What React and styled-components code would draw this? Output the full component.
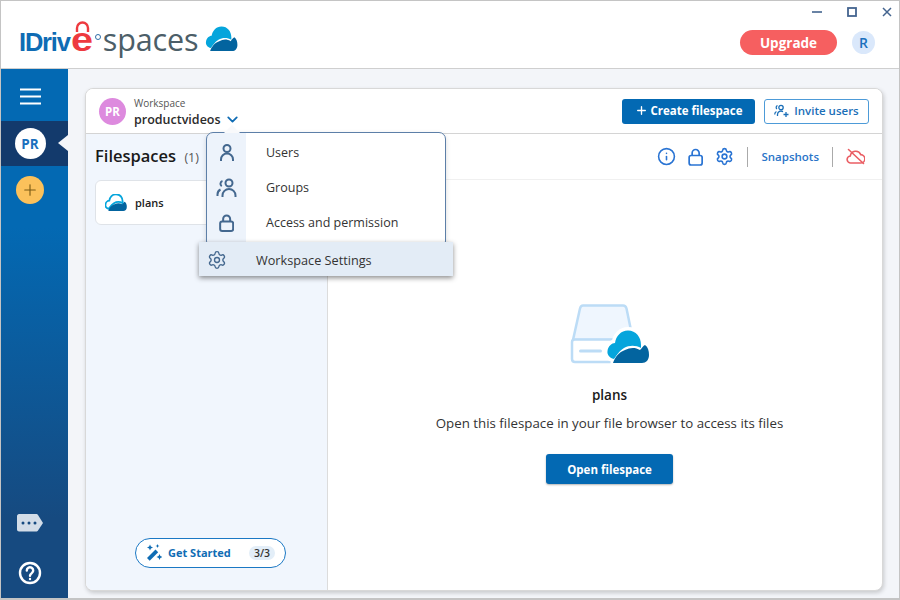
import React from 'react';
import styled, { createGlobalStyle } from 'styled-components';
import { Plus, Info, Settings, ChevronDown } from 'lucide-react';

const Global = createGlobalStyle`
  html, body { margin: 0; padding: 0; }
  body { font-family: "Open Sans", "Noto Sans", sans-serif; color: #222; }
  * { box-sizing: border-box; }
`;

const Window = styled.div`
  width: 900px;
  height: 600px;
  border: 1px solid #c4c4c4;
  border-bottom-width: 2px;
  display: flex;
  flex-direction: column;
  overflow: hidden;
  background: #fff;
`;

const TitleBar = styled.header`
  height: 68px;
  flex: none;
  border-bottom: 1px solid #cfcfcf;
  display: flex;
  align-items: flex-start;
  justify-content: space-between;
  background: #fff;
`;

const Brand = styled.div`
  display: flex;
  align-items: baseline;
  margin: 23px 0 0 18px;
`;

const BrandName = styled.span`
  font-family: "Liberation Sans", sans-serif;
  font-size: 25.5px;
  font-weight: 700;
  letter-spacing: -1.2px;
  color: #0f6cb4;
  line-height: 30px;
`;

const BrandE = styled.span`
  position: relative;
  display: inline-block;
  width: 23px;
  color: #ee3a3f;
  font-family: "Liberation Sans", sans-serif;
  font-size: 33px;
  font-weight: 700;
  line-height: 30px;
  margin-left: 1px;
`;

const BrandEGlyph = styled.span`
  display: inline-block;
  transform: scaleX(1.2);
  transform-origin: left center;
`;

const BrandLock = styled.svg`
  position: absolute;
  left: 4px;
  top: -4px;
`;

const BrandReg = styled.span`
  width: 6px;
  height: 6px;
  border-radius: 50%;
  border: 1.5px solid #2f6ea8;
  margin: 0 2px 0 1px;
  transform: translateY(-11px);
`;

const BrandSpaces = styled.span`
  font-family: "Open Sans", sans-serif;
  font-size: 30.5px;
  font-weight: 400;
  color: #4c5e68;
  letter-spacing: -0.1px;
  line-height: 30px;
  margin-right: 6px;
`;

const TopRight = styled.div`
  display: flex;
  flex-direction: column;
  align-items: flex-end;
`;

const WinControls = styled.div`
  display: flex;
  align-items: center;
  gap: 25px;
  height: 22px;
  margin: 0 7px 7px 0;
  color: #44648f;
`;

const AccountRow = styled.div`
  display: flex;
  align-items: center;
  gap: 15px;
  margin-right: 24px;
`;

const UpgradeButton = styled.button`
  width: 97px;
  height: 25px;
  border: none;
  border-radius: 13px;
  background: #f65f60;
  color: #fff;
  font: 700 13.5px "Open Sans", sans-serif;
  padding: 1px 0 0;
`;

const AccountBadge = styled.div`
  width: 23px;
  height: 23px;
  border-radius: 50%;
  background: #dae8fb;
  color: #1b70bd;
  font-size: 14px;
  font-weight: 600;
  display: flex;
  align-items: center;
  justify-content: center;
`;

const Body = styled.div`
  flex: 1;
  min-height: 0;
  display: flex;
`;

const Sidebar = styled.nav`
  width: 67px;
  flex: none;
  display: flex;
  flex-direction: column;
  background: linear-gradient(180deg, #0369b3 0%, #0369b3 30%, #164a80 85%, #164a80 100%);
`;

const MenuToggle = styled.div`
  height: 52px;
  display: flex;
  align-items: center;
  justify-content: center;
  color: #fff;
  padding: 2px 9px 0 0;
`;

const ActiveWorkspace = styled.div`
  position: relative;
  height: 45px;
  background: #133a6c;
  display: flex;
  align-items: center;
  justify-content: center;
  padding-right: 9px;
  &::after {
    content: '';
    position: absolute;
    right: 0;
    top: 14px;
    border: 8px solid transparent;
    border-left: none;
    border-right: 10px solid #f3f5f9;
  }
`;

const WorkspaceCircle = styled.div`
  width: 31px;
  height: 31px;
  border-radius: 50%;
  background: #fff;
  color: #1b70bd;
  font-size: 13.5px;
  font-weight: 700;
  display: flex;
  align-items: center;
  justify-content: center;
`;

const AddWorkspace = styled.div`
  width: 28px;
  height: 28px;
  margin: 10px 0 0 15px;
  border-radius: 50%;
  background: #fbc15b;
  color: #7a5a14;
  display: flex;
  align-items: center;
  justify-content: center;
`;

const SidebarBottom = styled.div`
  margin-top: auto;
  display: flex;
  flex-direction: column;
  align-items: center;
  gap: 28px;
  padding: 0 9px 13px 0;
  svg { display: block; }
`;

const Main = styled.main`
  flex: 1;
  min-width: 0;
  background: #f3f5f9;
  padding: 19px 16px 7px 17px;
  display: flex;
  position: relative;
`;

const Card = styled.section`
  flex: 1;
  display: flex;
  flex-direction: column;
  background: #fff;
  border: 1px solid #d8d8d8;
  border-radius: 8px;
  box-shadow: 1px 2px 4px rgba(0, 0, 0, 0.18);
  overflow: hidden;
`;

const CardHeader = styled.div`
  height: 45px;
  flex: none;
  display: flex;
  align-items: center;
  padding: 0 13px;
  border-bottom: 1px solid #d4d4d4;
  background: #fff;
`;

const PurpleAvatar = styled.div`
  width: 27px;
  height: 27px;
  border-radius: 50%;
  background: #dd8ade;
  color: #fff;
  font-size: 11.5px;
  font-weight: 700;
  display: flex;
  align-items: center;
  justify-content: center;
  margin-right: 8px;
`;

const WorkspaceInfo = styled.div`
  padding-top: 3px;
`;

const WorkspaceLabel = styled.div`
  font-size: 10px;
  color: #555;
  line-height: 13px;
`;

const WorkspaceName = styled.div`
  display: flex;
  align-items: center;
  gap: 3px;
  font-size: 12.5px;
  font-weight: 600;
  line-height: 19px;
  color: #2b2b2b;
  svg { color: #0f6cb4; }
`;

const HeaderActions = styled.div`
  margin-left: auto;
  display: flex;
  gap: 9px;
`;

const PrimaryButton = styled.button`
  display: flex;
  align-items: center;
  justify-content: center;
  gap: 3px;
  width: ${(p) => p.$width}px;
  height: ${(p) => p.$height || 25}px;
  border: none;
  border-radius: 3px;
  background: #0369b3;
  color: #fff;
  font: 700 11.5px "Open Sans", sans-serif;
  padding: ${(p) => (p.$shadow ? '1px 0 0' : '0 0 1px')};
  box-shadow: ${(p) => (p.$shadow ? '0 1px 2px rgba(0,0,0,.3)' : 'none')};
`;

const OutlineButton = styled.button`
  display: flex;
  align-items: center;
  justify-content: center;
  gap: 5px;
  width: 105px;
  height: 25px;
  border: 1px solid #4d9bd8;
  border-radius: 3px;
  background: #fff;
  color: #1b6fb8;
  font: 600 11.5px "Open Sans", sans-serif;
  padding: 0 0 2px;
  svg { margin-top: 2px; }
`;

const Columns = styled.div`
  flex: 1;
  min-height: 0;
  display: flex;
`;

const LeftPane = styled.aside`
  width: 242px;
  flex: none;
  background: #f1f6fd;
  border-right: 1px solid #dcdcdc;
  padding: 10px 9px 22px;
  display: flex;
  flex-direction: column;
`;

const PaneTitle = styled.div`
  font-size: 16.5px;
  font-weight: 600;
  color: #1a1a1a;
  line-height: 24px;
  span {
    font-size: 12.5px;
    font-weight: 400;
    color: #555;
    margin-left: 4px;
  }
`;

const FilespaceItem = styled.div`
  height: 45px;
  margin-top: 10px;
  background: #fff;
  border: 1px solid #dfe3e8;
  border-radius: 6px;
  display: flex;
  align-items: center;
  gap: 8px;
  padding: 0 9px 1px;
  font-size: 11px;
  font-weight: 600;
  color: #222;
`;

const GetStarted = styled.div`
  margin: auto 32px 0 auto;
  width: 151px;
  height: 30px;
  border: 1px solid #1b78c4;
  border-radius: 15px;
  background: #fff;
  display: flex;
  align-items: center;
  padding: 0 10px 1px 11px;
  color: #0f6cb4;
  font-size: 11px;
  font-weight: 700;
  svg { margin-right: 6px; }
`;

const StepCount = styled.span`
  margin-left: auto;
  background: #e3eef8;
  color: #333;
  border-radius: 7px;
  font-size: 10.5px;
  font-weight: 600;
  padding: 0 5px;
  line-height: 14px;
`;

const RightPane = styled.div`
  flex: 1;
  display: flex;
  flex-direction: column;
`;

const RightToolbar = styled.div`
  height: 46px;
  flex: none;
  border-bottom: 1px solid #f0f0f0;
  display: flex;
  align-items: center;
  justify-content: flex-end;
  gap: 10px;
  padding-right: 17px;
  color: #2a74d3;
  svg { display: block; }
`;

const ToolbarIcons = styled.div`
  display: flex;
  align-items: center;
  gap: 12px;
`;

const ToolbarDivider = styled.div`
  width: 1px;
  height: 20px;
  background: #aaa;
  margin: 0 3px;
`;

const SnapshotsLink = styled.span`
  font-size: 11.5px;
  font-weight: 600;
  color: #2a74c8;
`;

const EmptyState = styled.div`
  flex: 1;
  display: flex;
  flex-direction: column;
  align-items: center;
  padding: 124px 0 0 9px;
`;

const EmptyTitle = styled.div`
  font-size: 13.5px;
  font-weight: 600;
  color: #1a1a1a;
  margin-top: 22px;
  line-height: 18px;
`;

const EmptyText = styled.div`
  font-size: 13.3px;
  color: #333;
  margin: 9px 0 21px;
  line-height: 20px;
`;

const Dropdown = styled.div`
  position: absolute;
  left: 138px;
  top: 63px;
  width: 240px;
  height: 116px;
  padding-top: 2px;
  background: linear-gradient(90deg, #edf3fb 39px, #fff 39px);
  border: 1px solid #5d7fa8;
  border-radius: 7px;
  box-shadow: 0 2px 5px rgba(0, 0, 0, 0.15);
  &::before {
    content: '';
    position: absolute;
    left: 17px;
    top: -8px;
    border: 8px solid transparent;
    border-top: none;
    border-bottom: 8px solid #f8f9fb;
  }
`;

const DropdownRow = styled.div`
  height: 35px;
  display: flex;
  align-items: center;
  font-size: 12.5px;
  color: #333;
`;

const DropdownIcon = styled.div`
  width: 39px;
  flex: none;
  color: #44688f;
  display: flex;
  align-items: center;
  justify-content: center;
  margin-right: 20px;
`;

const SettingsRow = styled.div`
  position: absolute;
  left: -8px;
  top: 109px;
  width: 254px;
  height: 34px;
  background: #e3ecf6;
  box-shadow: 0 2px 5px rgba(0, 0, 0, 0.45);
  display: flex;
  align-items: center;
  padding: 1px 0 0 8px;
  font-size: 12.7px;
  color: #333;
  svg { color: #44688f; margin-right: 29px; }
`;

const lightCloud = 'M7 29C2 28 0 24 .5 21 1 16 5 13 8 13 9 6 14 .5 21 .5 29 .5 34 7 34 15c0 1 0 2 0 3-5-3-12-3-17 0-5 3-7 7-10 11z';
const darkCloud = 'M6 33C8 27 12 22 18 20c5-2.500 10-3 15 0 2-2 4-5 5-5 3 2 4 6 4 10 0 5-3 8-7 8z';

function CloudMark({ width, height, outlined }) {
  return (
    <svg width={width} height={height} viewBox="0 0 42 33">
      <path
        d={lightCloud}
        fill={outlined ? 'none' : '#05a5dc'}
        stroke={outlined ? '#05a5dc' : 'none'}
        strokeWidth={outlined ? 3.500 : 0}
      />
      <path d={darkCloud} fill="#03649f" />
    </svg>
  );
}

function HelpIcon() {
  return (
    <svg width="24" height="24" viewBox="0 0 24 24" fill="none" stroke="#fff" strokeWidth="2.400" strokeLinecap="round">
      <circle cx="12" cy="12" r="10" />
      <path d="M8.800 9.500a3.200 3.200 0 1 1 5 2.600c-1.100.8-1.800 1.300-1.800 2.700" />
      <path d="M12 18h.01" />
    </svg>
  );
}

function ChatTag() {
  return (
    <svg width="27" height="20" viewBox="0 0 27 20">
      <path d="M2 1h17c1 0 1.500.3 2 1l5 8-5 7.500c-.5.700-1 1-2 1H2c-1 0-2-1-2-2V3c0-1 1-2 2-2z" fill="#d3dde8" />
      <circle cx="6" cy="10" r="1.500" fill="#164a80" />
      <circle cx="12" cy="10" r="1.500" fill="#164a80" />
      <circle cx="18" cy="10" r="1.500" fill="#164a80" />
    </svg>
  );
}

function DriveIllustration() {
  return (
    <svg width="80" height="60" viewBox="0 0 80 60">
      <path d="M13 1.500h40c2 0 3 1 3.500 3L63 36H3l7-31.500c.5-2 1.500-3 3-3z" fill="#eff6fe" stroke="#bcdcf6" strokeWidth="2.500" strokeLinejoin="round" />
      <path d="M2 38c0-1.500 1-2.500 3-2.500h55c2 0 3 1 3 2.500v17c0 2-1 3-3 3H5c-2 0-3-1-3-3z" fill="#fff" stroke="#bcdcf6" strokeWidth="2.500" />
      <rect x="9" y="45.500" width="23" height="3" rx="1.500" fill="#bcdcf6" />
      <g transform="translate(37 26)">
        <path d={lightCloud} fill="#fff" stroke="#fff" strokeWidth="7" strokeLinejoin="round" />
        <path d={darkCloud} fill="#fff" stroke="#fff" strokeWidth="5" strokeLinejoin="round" />
        <path d={lightCloud} fill="#05a5dc" />
        <path d={darkCloud} fill="#03649f" />
      </g>
    </svg>
  );
}

function WandIcon() {
  return (
    <svg width="15" height="17" viewBox="0 0 15 17" fill="#0f6cb4">
      <path d="M0 14l8.500-8.500 2.700 2.700L2.700 16.700z" />
      <path d="M3 .5l.9 2.100 2.100.9-2.100.9L3 6.500l-.9-2.100L0 3.500l2.100-.9zM12.500 10l.9 2.100 2.100.9-2.100.9-.9 2.100-.9-2.100-2.100-.9 2.100-.9zM10.500 0l.6 1.400 1.400.6-1.400.6-.6 1.400-.6-1.400-1.400-.6 1.400-.6z" />
    </svg>
  );
}

function LockIcon({ size = 18, weight = 2 }) {
  return (
    <svg width={size * 0.85} height={size} viewBox="0 0 15 18" fill="none" stroke="currentColor" strokeWidth={weight}>
      <rect x="1" y="7.500" width="13" height="9.500" rx="2" />
      <path d="M4 7.500V5a3.500 3.500 0 0 1 7 0v2.500" />
    </svg>
  );
}

function UserIcon() {
  return (
    <svg width="16" height="18" viewBox="0 0 16 18" fill="none" stroke="currentColor" strokeWidth="2">
      <circle cx="8" cy="4.500" r="3.500" />
      <path d="M2 17v-1.500a6 6 0 0 1 12 0V17" />
    </svg>
  );
}

function GroupIcon() {
  return (
    <svg width="22" height="20" viewBox="0 0 22 20" fill="none" stroke="currentColor" strokeWidth="2">
      <circle cx="13" cy="5" r="3.500" />
      <path d="M6.500 19v-1.500a6.500 6.500 0 0 1 13 0V19" />
      <path d="M6.500 3a3 3 0 0 0-.8 5.300M1.500 18v-1.500c0-2.500 1-4 3-5" />
    </svg>
  );
}

function InviteIcon() {
  return (
    <svg width="15" height="14" viewBox="0 0 15 14" fill="none" stroke="currentColor" strokeWidth="1.300">
      <circle cx="7" cy="3.500" r="2.200" />
      <path d="M3.500 12V10.500a3.500 3.500 0 0 1 5.500-2.800" />
      <path d="M3.500 1.500a2 2 0 0 0-.5 3.500M.7 10.500c0-1.500.7-2.500 1.700-3" />
      <path d="M12 8v5M9.500 10.500h5" />
    </svg>
  );
}

function DisconnectedCloud() {
  return (
    <svg width="19" height="17" viewBox="0 0 19 17" fill="none" stroke="#ea5e64" strokeWidth="1.600" strokeLinecap="round">
      <path d="M5 15a3.500 3.500 0 0 1-.7-7A5.500 5.500 0 0 1 14.800 6.600 4.200 4.200 0 0 1 14.500 15z" />
      <path d="M2.500 1.500L17.500 15.500" />
    </svg>
  );
}

function App() {
  return (
    <Window>
      <Global />
      <TitleBar>
        <Brand>
          <BrandName>IDriv</BrandName>
          <BrandE>
            <BrandEGlyph>e</BrandEGlyph>
            <BrandLock width="15" height="11" viewBox="0 0 15 11" fill="none" stroke="#ee3a3f" strokeWidth="2.400">
              <path d="M2 11V7a5.500 5.500 0 0 1 11 0v4" />
            </BrandLock>
          </BrandE>
          <BrandReg />
          <BrandSpaces>spaces</BrandSpaces>
          <CloudMark width={33} height={25} />
        </Brand>
        <TopRight>
          <WinControls>
            <svg width="10" height="10" viewBox="0 0 10 10"><path d="M0 5h10" stroke="currentColor" strokeWidth="1.600" /></svg>
            <svg width="10" height="10" viewBox="0 0 10 10"><rect x="1" y="1" width="8" height="8" fill="none" stroke="currentColor" strokeWidth="1.800" /></svg>
            <svg width="10" height="10" viewBox="0 0 10 10"><path d="M1 1l8 8M9 1l-8 8" stroke="currentColor" strokeWidth="1.500" /></svg>
          </WinControls>
          <AccountRow>
            <UpgradeButton>Upgrade</UpgradeButton>
            <AccountBadge>R</AccountBadge>
          </AccountRow>
        </TopRight>
      </TitleBar>
      <Body>
        <Sidebar>
          <MenuToggle>
            <svg width="21" height="17" viewBox="0 0 21 17"><path d="M0 1.500h21M0 8.500h21M0 15.500h21" stroke="#fff" strokeWidth="1.800" /></svg>
          </MenuToggle>
          <ActiveWorkspace><WorkspaceCircle>PR</WorkspaceCircle></ActiveWorkspace>
          <AddWorkspace><Plus size={18} strokeWidth={1.500} /></AddWorkspace>
          <SidebarBottom>
            <ChatTag />
            <HelpIcon />
          </SidebarBottom>
        </Sidebar>
        <Main>
          <Card>
            <CardHeader>
              <PurpleAvatar>PR</PurpleAvatar>
              <WorkspaceInfo>
                <WorkspaceLabel>Workspace</WorkspaceLabel>
                <WorkspaceName>productvideos <ChevronDown size={17} strokeWidth={2.500} /></WorkspaceName>
              </WorkspaceInfo>
              <HeaderActions>
                <PrimaryButton $width={133}><Plus size={13} strokeWidth={2.500} /> Create filespace</PrimaryButton>
                <OutlineButton><InviteIcon /> Invite users</OutlineButton>
              </HeaderActions>
            </CardHeader>
            <Columns>
              <LeftPane>
                <PaneTitle>Filespaces <span>(1)</span></PaneTitle>
                <FilespaceItem>
                  <CloudMark width={22} height={17} outlined />
                  plans
                </FilespaceItem>
                <GetStarted>
                  <WandIcon />
                  Get Started
                  <StepCount>3/3</StepCount>
                </GetStarted>
              </LeftPane>
              <RightPane>
                <RightToolbar>
                  <ToolbarIcons>
                    <Info size={19} strokeWidth={2} />
                    <LockIcon weight={1.700} />
                    <Settings size={19} strokeWidth={2} />
                  </ToolbarIcons>
                  <ToolbarDivider />
                  <SnapshotsLink>Snapshots</SnapshotsLink>
                  <ToolbarDivider />
                  <DisconnectedCloud />
                </RightToolbar>
                <EmptyState>
                  <DriveIllustration />
                  <EmptyTitle>plans</EmptyTitle>
                  <EmptyText>Open this filespace in your file browser to access its files</EmptyText>
                  <PrimaryButton $width={127} $height={30} $shadow>Open filespace</PrimaryButton>
                </EmptyState>
              </RightPane>
            </Columns>
          </Card>
          <Dropdown>
            <DropdownRow><DropdownIcon><UserIcon /></DropdownIcon>Users</DropdownRow>
            <DropdownRow><DropdownIcon><GroupIcon /></DropdownIcon>Groups</DropdownRow>
            <DropdownRow><DropdownIcon><LockIcon /></DropdownIcon>Access and permission</DropdownRow>
            <SettingsRow><Settings size={20} strokeWidth={1.600} />Workspace Settings</SettingsRow>
          </Dropdown>
        </Main>
      </Body>
    </Window>
  );
}

export default App;
